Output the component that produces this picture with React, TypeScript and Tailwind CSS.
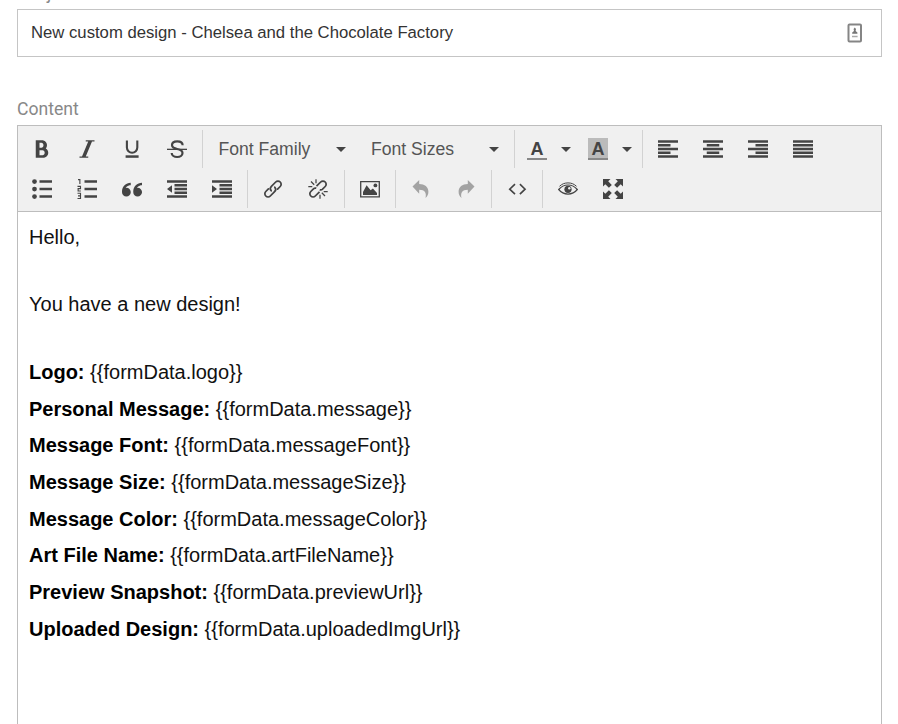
import type { ReactNode } from 'react';
import { ImBold, ImItalic, ImQuotesLeft } from 'react-icons/im';

function Icon({ children, box = '0 0 16 16' }: { children: ReactNode; box?: string }) {
  return (
    <svg viewBox={box} className="h-5 w-5 overflow-visible" fill="currentColor">
      {children}
    </svg>
  );
}

function Button({ children, muted = false }: { children: ReactNode; muted?: boolean }) {
  return (
    <button className={`flex h-10 w-[45px] items-center justify-center ${muted ? 'text-[#a3a3a3]' : 'text-[#444]'}`}>
      {children}
    </button>
  );
}

function Group({ children, first = false }: { children: ReactNode; first?: boolean }) {
  return (
    <div className="flex items-center">
      {!first && <div className="h-[38px] w-px bg-[#d2d2d2]" />}
      <div className={`flex pr-[3px] ${first ? 'pl-px' : 'pl-[2px]'}`}>{children}</div>
    </div>
  );
}

function Caret() {
  return (
    <svg viewBox="0 0 10 5" className="h-[5px] w-[10px]" fill="#444">
      <path d="M0 0h10L5 5z" />
    </svg>
  );
}

function Field({ label, value }: { label: string; value: string }) {
  return (
    <div>
      <strong className="font-bold">{label}</strong> <span className="text-[#111]">{value}</span>
    </div>
  );
}

const fields = [
  ['Logo:', '{{formData.logo}}'],
  ['Personal Message:', '{{formData.message}}'],
  ['Message Font:', '{{formData.messageFont}}'],
  ['Message Size:', '{{formData.messageSize}}'],
  ['Message Color:', '{{formData.messageColor}}'],
  ['Art File Name:', '{{formData.artFileName}}'],
  ['Preview Snapshot:', '{{formData.previewUrl}}'],
  ['Uploaded Design:', '{{formData.uploadedImgUrl}}'],
];

const link = (
  <g fill="none" stroke="currentColor" strokeWidth="1.75" strokeLinecap="round">
    <path d="M8.2 11.8a3.3 3.3 0 0 1 .2-4.5l4.3-4.3a3.1 3.1 0 0 1 4.5 4.5l-2.6 2.6" />
    <path d="M11.8 8.2a3.3 3.3 0 0 1-.2 4.5l-4.3 4.3a3.1 3.1 0 0 1-4.5-4.5l2.6-2.6" />
  </g>
);

export default function App() {
  return (
    <div className="flex h-[724px] w-[898px] flex-col overflow-hidden bg-white pr-4 pl-[17px] font-['Liberation_Sans',Arial,sans-serif]">
      <div className="-mt-[17px] h-[26px] shrink-0 font-[Roboto,sans-serif] text-[17.6px] leading-5 text-[#888]">Subject</div>
      <div className="flex h-12 shrink-0 items-center justify-between border border-[#c5c5c5] pr-[18px] pl-[13px]">
        <span className="text-[16.7px] text-[#333]">New custom design - Chelsea and the Chocolate Factory</span>
        <svg viewBox="0 0 16 20" className="h-5 w-4" fill="none">
          <rect x="1.5" y="1.5" width="12.5" height="17" rx="1" stroke="#858585" strokeWidth="2" />
          <path d="M7.8 4.5l1.2 1.6-.4 2 1.8 1.3v1.4H5.2V9.400l1.800-1.300-.4-2z" fill="#777" />
          <path d="M5 13.500h5.600" stroke="#aaa" strokeWidth="1.500" />
        </svg>
      </div>
      <div className="mt-[42px] h-[26px] shrink-0 font-[Roboto,sans-serif] text-[17.6px] leading-5 text-[#888]">Content</div>

      <div className="flex h-[620px] shrink-0 flex-col border border-[#bdbdbd]">
        <div className="h-[86px] shrink-0 border-b border-[#bdbdbd] bg-[#f0f0f0] pt-[3px]">
          <div className="flex">
            <Group first>
              <Button><ImBold className="h-5 w-5" /></Button>
              <Button><ImItalic className="h-5 w-5" /></Button>
              <Button>
                <Icon box="0 0 20 20">
                  <path d="M4.900 1.500v7.100a5.200 5.200 0 0 0 10.400 0V1.500" fill="none" stroke="currentColor" strokeWidth="2.100" />
                  <path d="M3.600 16.300h13v2.500h-13z" />
                </Icon>
              </Button>
              <Button>
                <Icon box="0 0 20 20">
                  <path d="M15.600 6.200C15.600 3.700 13.200 2.300 10.200 2.300S5 3.800 5 6.100s2 3.300 5.200 3.900 5.300 1.600 5.300 4-2.300 4-5.300 4-5.500-1.500-5.500-4" fill="none" stroke="currentColor" strokeWidth="2.200" />
                  <path d="M0 9.700h20V11H0z" />
                </Icon>
              </Button>
            </Group>
            <Group>
              <button className="flex h-10 w-[153px] items-center justify-between pr-[12px] pl-[13.500px] text-[17.600px] text-[#555]">
                Font Family <Caret />
              </button>
              <button className="flex h-10 w-[153px] items-center justify-between pr-[12px] pl-[13px] text-[17.600px] text-[#555]">
                Font Sizes <Caret />
              </button>
            </Group>
            <Group>
              <div className="flex h-10 w-[61px] items-center pl-[10px]">
                <div className="flex h-[22px] w-5 flex-col items-center border-b-2 border-[#888] text-[18px] leading-[22px] font-bold text-[#444]">A</div>
                <div className="ml-[14px]"><Caret /></div>
              </div>
              <div className="flex h-10 w-[61px] items-center pl-[10px]">
                <div className="flex h-[22px] w-5 flex-col items-center border-b-2 border-[#888] bg-[#bbb] text-[18px] leading-[22px] font-bold text-[#444]">A</div>
                <div className="ml-[14px]"><Caret /></div>
              </div>
            </Group>
            <Group>
              <Button><Icon><path d="M0 1h16v2H0zm0 3h10v2H0zm0 6h10v2H0zm0-3h16v2H0zm0 6h16v2H0z" /></Icon></Button>
              <Button><Icon><path d="M0 1h16v2H0zm3 3h10v2H3zm0 6h10v2H3zM0 7h16v2H0zm0 6h16v2H0z" /></Icon></Button>
              <Button><Icon><path d="M0 1h16v2H0zm6 3h10v2H6zm0 6h10v2H6zM0 7h16v2H0zm0 6h16v2H0z" /></Icon></Button>
              <Button><Icon><path d="M0 1h16v2H0zm0 3h16v2H0zm0 3h16v2H0zm0 3h16v2H0zm0 3h16v2H0z" /></Icon></Button>
            </Group>
          </div>

          <div className="flex">
            <Group first>
              <Button>
                <Icon>
                  <path d="M6 1h10v2H6zm0 6h10v2H6zm0 6h10v2H6z" />
                  <circle cx="2" cy="2" r="1.900" /><circle cx="2" cy="8" r="1.900" /><circle cx="2" cy="14" r="1.900" />
                </Icon>
              </Button>
              <Button>
                <Icon>
                  <path d="M6 1h10v2H6zm0 6h10v2H6zm0 6h10v2H6z" />
                  <path d="M.8 .5h1.500V4M.4 5.900h2.400v1.800H.9V9.600h2.200M.4 11.400h2.400v4.200H.4M.8 13.500h2" fill="none" stroke="currentColor" strokeWidth=".9" />
                </Icon>
              </Button>
              <Button><ImQuotesLeft className="h-5 w-5" /></Button>
              <Button><Icon><path d="M0 1h16v2H0zm6 3h10v2H6zm0 3h10v2H6zm0 3h10v2H6zm-6 3h16v2H0zM4 5v6L0 8z" /></Icon></Button>
              <Button><Icon><path d="M0 1h16v2H0zm6 3h10v2H6zm0 3h10v2H6zm0 3h10v2H6zm-6 3h16v2H0zM0 5v6l4-3z" /></Icon></Button>
            </Group>
            <Group>
              <Button><Icon box="0 0 20 20">{link}</Icon></Button>
              <Button>
                <Icon box="0 0 20 20">
                  <g fill="none" stroke="currentColor" strokeWidth="1.750">
                    <path d="M8.500 7.200l4.200-4.200a3.100 3.100 0 0 1 4.500 4.500l-2.900 2.900c-.8.700-1.700.7-2.600.4" />
                    <path d="M11.500 12.800l-4.200 4.200a3.100 3.100 0 0 1-4.500-4.500l2.900-2.900c.8-.7 1.700-.7 2.600-.4" />
                    <path d="M3 2.500l3.200 3.200M8 .2v4M.3 7.500h4M13.800 13.800l3.200 3.200M12 15.800v4M15.700 12.500h4" strokeWidth="1.250" />
                  </g>
                </Icon>
              </Button>
              <div className="w-px" />
            </Group>
            <Group>
              <Button>
                <Icon box="0 0 20 20">
                  <path d="M.7 2.700h18.600v15.200H.7z" fill="none" stroke="currentColor" strokeWidth="1.300" />
                  <path d="M3 16V13l3.600-6.800 4 5.100 2.300-1.800 4.100 4.500v2z" />
                  <circle cx="15.400" cy="6.400" r="1.900" />
                </Icon>
              </Button>
            </Group>
            <Group>
              <Button muted><Icon box="0 0 20 20"><path d="M1.500 7.500L8.200.9v4.200c5.500 0 9.200 3 9.200 7.700 0 2.800-1.100 4.700-2.900 6.200 1.200-5-.5-8.300-6.300-8.300v4z" /></Icon></Button>
              <Button muted><Icon box="0 0 20 20"><path d="M18.500 7.500L11.800.9v4.200c-5.500 0-9.200 3-9.200 7.700 0 2.800 1.100 4.700 2.900 6.200-1.200-5 .5-8.300 6.300-8.300v4z" /></Icon></Button>
            </Group>
            <Group>
              <Button><Icon box="0 0 20 20"><path d="M8 5.200L2.700 10.200 8 15.200M12.900 5.200l5.200 5-5.200 5" fill="none" stroke="currentColor" strokeWidth="1.600" /></Icon></Button>
            </Group>
            <Group>
              <Button>
                <Icon box="0 0 20 20">
                  <path d="M.7 10.500c2.700-3.300 5.800-4.500 9.300-4.500s6.600 1.200 9.300 4.500c-2.700 3.300-5.800 4.600-9.300 4.600S3.400 13.800.7 10.500z" fill="none" stroke="currentColor" strokeWidth="1.200" />
                  <path d="M1.500 7.300C4 4.900 6.700 3.900 10 3.900s6 1 8.500 3.400" fill="none" stroke="currentColor" strokeWidth="1" />
                  <circle cx="10" cy="10.300" r="3.600" />
                  <circle cx="11.300" cy="9.200" r="1.200" fill="#f0f0f0" />
                </Icon>
              </Button>
              <Button>
                <Icon box="0 0 20 20">
                  <path d="M0 0h7.500L5.200 2.300 8.800 5.900 5.900 8.800 2.300 5.200 0 7.500zM20 0v7.500l-2.300-2.300-3.600 3.600-2.900-2.900 3.600-3.600L12.500 0zM20 20h-7.500l2.300-2.300-3.600-3.600 2.900-2.900 3.600 3.600 2.300-2.300zM0 20v-7.500l2.300 2.300 3.600-3.600 2.900 2.900-3.600 3.600L7.500 20z" />
                </Icon>
              </Button>
            </Group>
          </div>
        </div>

        <div className="pt-[7px] pl-[11px] text-[20px] leading-[36.700px] text-black">
          <div className="text-[#111]">Hello,</div>
          <div className="mt-[30.500px] text-[#111]">You have a new design!</div>
          <div className="mt-[31px]">
            {fields.map(([label, value]) => (
              <Field key={label} label={label} value={value} />
            ))}
          </div>
        </div>
      </div>
    </div>
  );
}
